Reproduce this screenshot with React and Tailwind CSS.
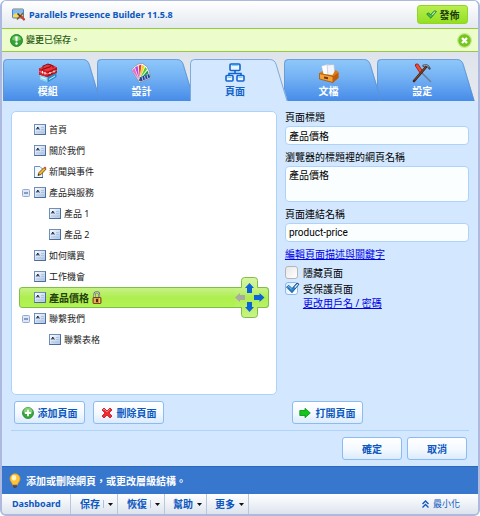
import React, { useState } from 'react';

const TABS = [
  { id: 'modules', label: '模組', Icon: ModulesIcon, layer: 'z-[4]' },
  { id: 'design', label: '設計', Icon: DesignIcon, layer: 'z-[3]' },
  { id: 'pages', label: '頁面', Icon: PagesIcon, layer: 'z-[2]' },
  { id: 'docs', label: '文檔', Icon: DocsIcon, layer: 'z-[1]' },
  { id: 'settings', label: '設定', Icon: SettingsIcon, layer: 'z-0' },
];

const PAGES = [
  { id: 'home', label: '首頁' },
  { id: 'about', label: '關於我們' },
  { id: 'news', label: '新聞與事件', blog: true },
  { id: 'products', label: '產品與服務', expandable: true },
  { id: 'product1', label: '產品 1', child: true },
  { id: 'product2', label: '產品 2', child: true },
  { id: 'buy', label: '如何購買' },
  { id: 'jobs', label: '工作機會' },
  { id: 'price', label: '產品價格', locked: true },
  { id: 'contact', label: '聯繫我們', expandable: true },
  { id: 'form', label: '聯繫表格', child: true },
];

const MENUS = [
  { label: '保存', split: true },
  { label: '恢復', split: true },
  { label: '幫助' },
  { label: '更多' },
];

function BuilderIcon() {
  return (
    <svg className="h-[13px] w-[14px]" viewBox="0 0 14 13">
      <rect x="0.5" y="1" width="11" height="9" rx="1" fill="#ffd84a" stroke="#4a83cf" />
      <path d="M1 2h10v3L7 6 4 5 1 7z" fill="#7fbaf5" />
      <path d="M5 11.5 11 5" stroke="#8b5a2b" strokeWidth="1.6" />
      <path d="m5.5 5.5 7 6.5" stroke="#3c3c44" strokeWidth="1.6" />
      <path d="m9 8 3.5 4" stroke="#df3a21" strokeWidth="2" />
    </svg>
  );
}

function InfoIcon() {
  return (
    <svg className="h-[13px] w-[13px]" viewBox="0 0 13 13">
      <circle cx="6.5" cy="6.5" r="6" fill="#35a236" stroke="#278b2c" />
      <path d="M2 5.5a4.6 4.6 0 0 1 9 0 9 9 0 0 1-9 0" fill="#76cb68" />
      <path d="M5.2 2.5h2.6l-.5 5H5.7z" fill="#fff" />
      <circle cx="6.5" cy="9.5" r="1.2" fill="#fff" />
    </svg>
  );
}

function CheckIcon() {
  return (
    <svg className="h-[9px] w-[11px]" viewBox="0 0 11 9">
      <path d="m.7 4.2 1.8-1.4 2 2L8.6.7l1.8.8-5.6 6.7z" fill="#4dbb55" stroke="#197a30" strokeWidth=".8" />
      <path d="m6 4.2 2.6-2.8.9.3L6.600 5z" fill="#d5f7cd" />
    </svg>
  );
}

function CloseIcon() {
  return (
    <svg className="h-[15px] w-[15px]" viewBox="0 0 15 15">
      <circle cx="7.5" cy="7.5" r="6.8" fill="#76c51e" stroke="#c4ea87" strokeWidth="1.2" />
      <path d="m5 5 5 5m0-5-5 5" stroke="#fff" strokeWidth="2.4" />
    </svg>
  );
}

function ModulesIcon() {
  return (
    <svg className="h-5 w-5" viewBox="0 0 20 20">
      <path d="m1.500 11 17-3v6l-9 5.500-8-3z" fill="#2a8bc8" />
      <path d="m1.500 11.500 8 2.500v5.500l-8-3z" fill="#8fd6f5" />
      <path d="m3 14.500 5 1.600m3 .4 6-3.500" stroke="#fff" strokeWidth=".8" />
      <path d="M1 5.500 12 1l7 3.500v5L9.500 14 1 11.500z" fill="#b40f17" />
      <path d="M1 5.500 12 1l7 3.500L9.500 8.500z" fill="#e8383e" />
      <path d="m1 5.500 8.500 3V14L1 11.500z" fill="#d4202a" />
      <path d="M5 4.800V3l5-2 5 2v1.800M4 6.500l9-3" fill="none" stroke="#8e0710" strokeWidth="1.100" />
      <path d="m1.500 8.500 8 2.500 9-3.500" fill="none" stroke="#ff9d9d" strokeWidth=".9" />
      <path d="M4.500 8v2.500M7 9v2.500m5-2.500v2m4-3.500v2" stroke="#fff" strokeWidth="1" />
    </svg>
  );
}

function DesignIcon() {
  return (
    <svg className="h-5 w-5" viewBox="0 0 20 20">
      <path d="M8.500 19.500.5 7l3-3.500 4-2.500 4-.5 4.500 3L18 8l2 7z" fill="#f8faf6" stroke="#6e8294" strokeWidth=".6" />
      <path d="M8 17 1.200 7.200 3.500 5z" fill="#ee6ac4" />
      <path d="M8.200 16 4 4.500 6.600 2.800z" fill="#b54ad8" />
      <path d="m8.700 15-1-12.500 2.700-.8z" fill="#ef3b2d" />
      <path d="M9 15 11 2l2.500 1.200z" fill="#f3cf21" />
      <path d="m9.200 15.300 5-11.300 1.900 2.300z" fill="#57c72c" />
      <path d="M9.500 16 16.500 7.500l1.200 2.700z" fill="#1e9d55" />
      <path d="m8.500 14.500 9.600-3.500 1.100 3.500-10 4z" fill="#223d99" />
      <path d="m11 14 .8 3m1.700-4 .8 3m1.700-4 .8 3" stroke="#ddeaff" strokeWidth=".8" />
      <circle cx="8.700" cy="17" r="1" fill="#566" />
    </svg>
  );
}

function PagesIcon() {
  return (
    <svg className="h-5 w-5" viewBox="0 0 20 20" fill="#e8f7ff" stroke="#1463d2" strokeWidth="1.6">
      <path d="M10 7v4M4 14v-3.5h12V14" fill="none" />
      <rect x="5" y="1" width="10" height="6.5" rx="1" />
      <rect x="1" y="12.5" width="7" height="5.5" rx="1" />
      <rect x="12" y="12.5" width="7" height="5.5" rx="1" />
      <path d="M6.5 2.500h7M2.500 14.500h4m7 0h4" stroke="#6fd2f7" strokeWidth="1" />
    </svg>
  );
}

function DocsIcon() {
  return (
    <svg className="h-5 w-5" viewBox="0 0 20 20">
      <path d="m2.500 3 7-2 2 11-7 1z" fill="#fff" stroke="#aebbd0" strokeWidth=".6" />
      <path d="m8 2 7-.5L16 12l-7 1z" fill="#f1f4fb" stroke="#aebbd0" strokeWidth=".6" />
      <path d="m.5 10 3-2 1 3 9 1 3-5 3 2v6L14 19.500.500 16z" fill="#dd7c15" />
      <path d="m.5 10.500 13.500 3v6L.500 16z" fill="#f4a238" stroke="#9d4f09" strokeWidth=".7" />
      <path d="m14 13.500 5.500-4V15L14 19.500z" fill="#bd5c0a" />
      <path d="m5 13.500 4 .8v2l-4-.8z" fill="#713708" />
    </svg>
  );
}

function SettingsIcon() {
  return (
    <svg className="h-5 w-5" viewBox="0 0 20 20" fill="none" strokeLinecap="round">
      <path d="m9 9 9.5 9.5" stroke="#6f7f92" strokeWidth="1.5" />
      <path d="m5 2.500 4 6" stroke="#a31511" strokeWidth="4" />
      <path d="m5 2.500 4 6" stroke="#f04b31" strokeWidth="2.4" />
      <path d="M2 18 14 4" stroke="#4d2413" strokeWidth="2.6" />
      <path d="M3 16.500 13.500 4.500" stroke="#9b5b34" strokeWidth=".8" />
      <path d="M11.500 2.800c2.500-1.300 4-.8 6 2.700" stroke="#46505f" strokeWidth="2.400" />
      <path d="M12 2.300c2-.6 3 0 4.500 1.500" stroke="#c8d0da" strokeWidth=".8" />
    </svg>
  );
}

function PageIcon() {
  return (
    <svg className="h-[11px] w-3 shrink-0" viewBox="0 0 12 11">
      <defs>
        <linearGradient id="page-fill" x1="0" y1="0" x2="1" y2="1">
          <stop offset="0" stopColor="#fff" />
          <stop offset="1" stopColor="#a9c4e8" />
        </linearGradient>
      </defs>
      <rect x=".5" y=".5" width="11" height="10" fill="url(#page-fill)" stroke="#6f8fb8" />
      <path d="M2.300 5.500 3.800 3l1.500 2.500M3 4.800h1.600" fill="none" stroke="#1f2d45" strokeWidth="1" />
      <path d="M7 3.500h3M7 5.500h3M2 8h8" stroke="#a8bddb" strokeWidth=".8" />
      <path d="M11.500.500v10H.500" fill="none" stroke="#4d6c99" />
    </svg>
  );
}

function BlogIcon() {
  return (
    <svg className="-mx-px h-3 w-[14px] shrink-0" viewBox="0 0 14 12">
      <path d="M1.500.500H7l2.500 2.500v8.500h-8z" fill="#f3f8ff" stroke="#6f93c4" />
      <path d="M1 11.500h9" stroke="#36557f" />
      <path d="m5 9.500 1-3 5-5 2 1.700-5 5.300z" fill="#f5b62b" stroke="#5b3c0c" strokeWidth=".8" />
      <path d="m11 1.500 1-1 1.500 1.500-.8 1z" fill="#d9374a" />
      <path d="m5 9.500.6-1.600 1 .9z" fill="#111" />
    </svg>
  );
}

function LockIcon() {
  return (
    <svg className="h-[13px] w-[10px] shrink-0" viewBox="0 0 10 13">
      <path d="M2.500 7V3.500a2.300 2.300 0 0 1 4.600 0V7" fill="none" stroke="#5a5f55" strokeWidth="2" />
      <path d="M2.500 7V3.500a2.300 2.300 0 0 1 4.600 0V7" fill="none" stroke="#e6e9e2" strokeWidth=".8" />
      <rect x="1" y="6.500" width="8" height="6" rx=".8" fill="#d98b36" stroke="#5b3013" strokeWidth=".8" />
      <path d="M3 7v5M7.500 7v5" stroke="#f9d899" strokeWidth=".8" />
      <path d="M5 8v3" stroke="#3b1d08" strokeWidth="1.800" />
    </svg>
  );
}

function ExpanderIcon() {
  return (
    <svg className="h-2 w-2" viewBox="0 0 8 8">
      <rect x=".5" y=".5" width="7" height="7" rx="1" fill="#dde6f5" stroke="#94abd0" />
      <path d="M2 4h4" stroke="#2d4f90" />
    </svg>
  );
}

// Cross shaped pad that moves the selected page within the tree
function MovePad() {
  return (
    <svg className="absolute -top-[11px] -right-px h-[41px] w-[34px]" viewBox="0 0 34 41">
      <defs>
        <linearGradient id="pad-fill" x1="0" y1="0" x2="0" y2="1">
          <stop offset="0" stopColor="#d6f6a2" />
          <stop offset=".3" stopColor="#c6f184" />
          <stop offset=".5" stopColor="#aeee4f" />
          <stop offset="1" stopColor="#c9f388" />
        </linearGradient>
      </defs>
      <path
        d="M0 10.5h6.5v-7q0-3 3-3h10q3 0 3 3v7h8q3 0 3 3v14q0 3-3 3h-8v7q0 3-3 3h-10q-3 0-3-3v-7H0"
        fill="url(#pad-fill)"
        stroke="#7fbf45"
      />
      <path d="m14.5 6 4.500 5H17v5h-5v-5h-2z" fill="#0a63d8" />
      <path d="m14.5 35 4.500-5H17v-5h-5v5h-2z" fill="#0a63d8" />
      <path d="m29.5 20.500-5-4.500v2H19v5h5.500v2z" fill="#0a63d8" />
      <path d="m0 20.500 5-4.500v2h5v5H5v2z" fill="#a9aaa5" />
    </svg>
  );
}

function AddIcon() {
  return (
    <svg className="h-3 w-3" viewBox="0 0 12 12">
      <circle cx="6" cy="6" r="5.500" fill="#35a83a" stroke="#2c7f34" strokeWidth=".8" />
      <path d="M1.500 5a4.500 4.500 0 0 1 9 0q-4.500 2-9 0" fill="#7fd375" />
      <path d="M6 2.800v6.400M2.800 6h6.400" stroke="#fff" strokeWidth="1.800" />
    </svg>
  );
}

function DeleteIcon() {
  return (
    <svg className="h-3 w-3" viewBox="0 0 12 12">
      <path d="m1 3 2-2 3 3 3-3 2 2-3 3 3 3-2 2-3-3-3 3-2-2 3-3z" fill="#f02a30" stroke="#c2131b" strokeWidth=".8" />
      <path d="m2 3 1-1 3 3 3-3" fill="none" stroke="#ff8d8d" strokeWidth=".8" />
    </svg>
  );
}

function OpenIcon() {
  return (
    <svg className="h-3 w-3" viewBox="0 0 12 12">
      <path d="M.8 3.500H6V1.300L11.300 6 6 10.700V8.500H.8z" fill="#10c81c" stroke="#0b8a17" strokeWidth=".8" />
    </svg>
  );
}

function BulbIcon() {
  return (
    <svg className="h-4 w-3" viewBox="0 0 12 16">
      <path d="M6 .8a5 5 0 0 0-5 5c0 2.500 2 3.500 2.600 6h4.800C9 9.300 11 8.300 11 5.800a5 5 0 0 0-5-5" fill="#ffc437" stroke="#ed9b16" strokeWidth=".8" />
      <ellipse cx="5" cy="4.800" rx="2.300" ry="2.800" fill="#fff6c4" />
      <path d="M4 12.300h4v1.500l-1 1.200H5l-1-1.200z" fill="#4f4a50" />
    </svg>
  );
}

function TabShape({ active }) {
  return (
    <svg className="absolute inset-y-0 left-0 h-full w-[calc(100%+5px)]" viewBox="0 0 99 42" preserveAspectRatio="none">
      <defs>
        <linearGradient id="tab-blue" x1="0" y1="0" x2="0" y2="1">
          <stop offset="0" stopColor="#8fc8fa" />
          <stop offset=".45" stopColor="#73b1f4" />
          <stop offset="1" stopColor="#468be8" />
        </linearGradient>
      </defs>
      <path d="M0 42V4Q0 0 4 0H80Q85 0 87 5L98 42z" fill={active ? '#d3e8ff' : 'url(#tab-blue)'} />
      <path d="M.5 42V4.500q0-4 4-4H80q5 0 6.500 5L97.500 42" fill="none" stroke="#5f93ce" strokeOpacity=".75" />
    </svg>
  );
}

function ActionButton({ icon, className = '', children }) {
  return (
    <button
      type="button"
      className={`flex h-[23px] items-center justify-center gap-1 rounded-[3px] border border-[#8bbcf1] bg-linear-to-b from-white via-[#f5faff] to-[#dcebfc] text-[10px] font-bold text-[#0b58c0] ${className}`}
    >
      {icon}
      {children}
    </button>
  );
}

function CheckField({ label, defaultChecked }) {
  return (
    <label className="flex h-[13px] items-center gap-[5px]">
      <span className="relative flex">
        <input
          type="checkbox"
          defaultChecked={defaultChecked}
          className="peer h-[13px] w-[13px] appearance-none rounded-[3px] border border-[#b3b6bb] bg-linear-to-br from-[#e8e8e8] to-white checked:border-[#8bbcf1] checked:from-[#d9eafc]"
        />
        <svg className="pointer-events-none absolute top-0 left-0 hidden h-3 w-[15px] peer-checked:block" viewBox="0 0 15 12">
          <path d="m1.500 5 2.500-1.500 3 3L12 1l2 1.200-7 8.500z" fill="#2382da" stroke="#183f68" strokeWidth=".8" />
          <path d="m9.500 5 2.800-3 .8.500-3 3.500z" fill="#fff" />
          <path d="m2.500 5.200 1.300-.8 3 3" fill="none" stroke="#7fd0fb" />
        </svg>
      </span>
      {label}
    </label>
  );
}

export default function App() {
  const [activeTab, setActiveTab] = useState('pages');
  const [selected, setSelected] = useState('price');
  const [showMessage, setShowMessage] = useState(true);

  const field =
    "block w-full rounded-[4px] border border-[#aed3fb] bg-[#fafeff] px-[3px] font-['Roboto','Noto_Sans_CJK_TC',sans-serif] text-[10px] leading-[14px] text-black outline-none";

  return (
    <div className="w-full overflow-hidden rounded-[6px] border-x-2 border-t border-b-2 border-[#adb9de] bg-[#d3e8ff] font-['Noto_Sans','Noto_Sans_CJK_TC',sans-serif] text-[10px] leading-3 text-black">
      <header className="flex h-7 items-center border-b border-[#94cb3f] bg-linear-to-b from-white to-[#e3e9ef] pr-[10px] pl-[10px]">
        <BuilderIcon />
        <h1 className="ml-[3px] text-[9px] font-bold text-[#0b58c0]">Parallels Presence Builder 11.5.8</h1>
        <button
          type="button"
          className="ml-auto flex h-[19px] w-[51px] items-center justify-center gap-[3px] rounded-[3px] border border-[#92d42a] bg-linear-to-b from-[#b8ee4d] to-[#93e01f] text-[10px] font-bold text-[#1c3c08]"
        >
          <CheckIcon />
          發佈
        </button>
      </header>

      {showMessage && (
        <div className="flex h-[23px] items-center border-b border-[#94cb3f] bg-[#ecfdcb] pr-[6px] pl-2">
          <InfoIcon />
          <p className="ml-[3px] text-[9px] font-medium text-[#2b5c14]">變更已保存。</p>
          <button type="button" aria-label="關閉" className="ml-auto" onClick={() => setShowMessage(false)}>
            <CloseIcon />
          </button>
        </div>
      )}

      <nav className="flex bg-linear-to-b from-[#dfe4ec] to-[#e6e9ee] pt-[7px] pr-[7px] pl-px">
        {TABS.map(({ id, label, Icon, layer }) => {
          const active = activeTab === id;
          return (
            <button
              key={id}
              type="button"
              onClick={() => setActiveTab(id)}
              className={`relative h-[42px] flex-1 text-[10px] font-bold ${
                active ? 'z-[5] text-[#1263c9]' : `${layer} text-white`
              }`}
            >
              <TabShape active={active} />
              <span className="relative flex flex-col items-center gap-[2px] pr-1">
                <Icon />
                {label}
              </span>
            </button>
          );
        })}
      </nav>

      <main className="px-[9px] pt-[10px] pb-[6px]">
        <div className="grid grid-cols-[13fr_9fr] gap-2">
          <ul className="rounded-[5px] border border-[#aed3fb] bg-white px-[7px] pt-[7px] pb-11 text-[9px] text-[#222]">
            {PAGES.map(page => {
              const active = selected === page.id;
              return (
                <li
                  key={page.id}
                  className={`relative flex h-[21px] items-center rounded-[3px] border pl-[2px] ${
                    active
                      ? 'border-[#7fbf45] bg-linear-to-b from-[#c6f184] via-[#aeee4f] to-[#b2f453] text-[10px] font-bold text-[#23400d]'
                      : 'border-transparent'
                  }`}
                >
                  <span className={`flex shrink-0 ${page.child ? 'w-[27px]' : 'w-3'}`}>
                    {page.expandable && (
                      <button type="button" aria-label="收起" className="block">
                        <ExpanderIcon />
                      </button>
                    )}
                  </span>
                  <button type="button" className="flex items-center gap-[3px]" onClick={() => setSelected(page.id)}>
                    {page.blog ? <BlogIcon /> : <PageIcon />}
                    {page.label}
                    {page.locked && <LockIcon />}
                  </button>
                  {active && <MovePad />}
                </li>
              );
            })}
          </ul>

          <form className="flex flex-col items-stretch gap-[6px]" onSubmit={e => e.preventDefault()}>
            <div className="flex flex-col gap-[3px]">
              <label htmlFor="page-title">頁面標題</label>
              <input id="page-title" defaultValue="產品價格" className={`${field} h-[19px]`} />
            </div>
            <div className="flex flex-col gap-[3px]">
              <label htmlFor="browser-title">瀏覽器的標題裡的網頁名稱</label>
              <textarea id="browser-title" defaultValue="產品價格" className={`${field} h-9 resize-none py-[2px]`} />
            </div>
            <div className="flex flex-col gap-[3px]">
              <label htmlFor="page-link">頁面連結名稱</label>
              <input id="page-link" defaultValue="product-price" className={`${field} h-[19px]`} />
            </div>
            <a href="#meta" className="self-start text-[#0000e6] underline">編輯頁面描述與關鍵字</a>
            <div className="flex flex-col gap-[3px]">
              <CheckField label="隱藏頁面" />
              <CheckField label="受保護頁面" defaultChecked />
              <a href="#password" className="-mt-px ml-[18px] self-start text-[#0000e6] underline">更改用戶名 / 密碼</a>
            </div>
          </form>
        </div>

        <div className="grid grid-cols-[13fr_9fr] gap-2 border-b border-[#aed3fb] py-[6px]">
          <div className="flex gap-2 pl-[3px]">
            <ActionButton icon={<AddIcon />} className="w-[71px]">添加頁面</ActionButton>
            <ActionButton icon={<DeleteIcon />} className="w-[71px]">刪除頁面</ActionButton>
          </div>
          <div className="pl-[7px]">
            <ActionButton icon={<OpenIcon />} className="w-[71px]">打開頁面</ActionButton>
          </div>
        </div>

        <div className="flex justify-end gap-[5px] pt-[6px] pr-[2px]">
          <ActionButton className="w-[60px]">確定</ActionButton>
          <ActionButton className="w-[60px]">取消</ActionButton>
        </div>
      </main>

      <div className="flex h-7 items-center gap-[5px] border-t border-[#2c67bb] bg-[#3777cd] pl-[7px] text-[10px] font-bold text-white">
        <BulbIcon />
        <p>添加或刪除網頁，或更改層級結構。</p>
      </div>

      <footer className="flex h-5 items-stretch bg-linear-to-b from-white to-[#dde4ee] font-bold text-[#0b58c0]">
        <a href="#dashboard" className="flex w-[69px] items-center border-r border-[#b9c7dc] pl-[10px] text-[9px]">
          Dashboard
        </a>
        {MENUS.map(({ label, split }) => (
          <button
            key={label}
            type="button"
            className={`flex items-center justify-between border-r border-[#b9c7dc] pr-1 ${
              split ? 'w-[47px] pl-[9px]' : 'w-[42px] pl-2'
            }`}
          >
            {label}
            <span className={`flex h-2 items-center ${split ? 'border-l border-[#a9c3e6] pl-1' : ''}`}>
              <svg className="h-[3px] w-[5px]" viewBox="0 0 5 3">
                <path d="M0 0h5L2.500 3z" fill="#111" />
              </svg>
            </span>
          </button>
        ))}
        <button type="button" className="ml-auto flex items-center gap-1 pr-[18px] text-[9px] font-normal">
          <svg className="h-2 w-[7px]" viewBox="0 0 7 8" fill="none" stroke="#0b58c0" strokeWidth="1.4">
            <path d="m.5 4 3-3 3 3m-6 3.500 3-3 3 3" />
          </svg>
          最小化
        </button>
      </footer>
    </div>
  );
}
